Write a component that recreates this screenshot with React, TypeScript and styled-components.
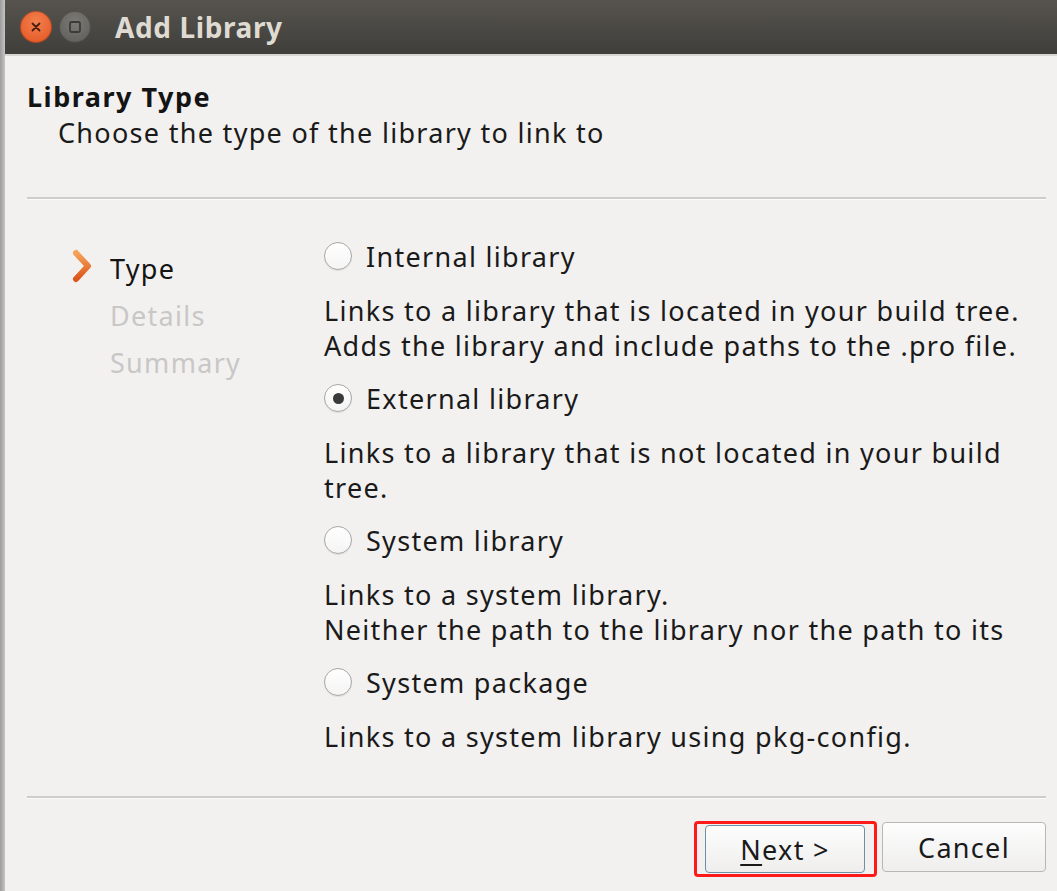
import styled, { createGlobalStyle } from 'styled-components';

const GlobalStyle = createGlobalStyle`
  html, body {
    margin: 0;
    padding: 0;
    background: #f2f1f0;
    overflow: hidden;
  }
  body {
    font-family: 'Noto Sans', 'DejaVu Sans', sans-serif;
    letter-spacing: 1.3px;
  }
`;

const Screen = styled.div`
  display: flex;
  width: 1057px;
  height: 891px;
`;

const DesktopEdge = styled.div`
  width: 5px;
  background: linear-gradient(90deg, #9c9c9c, #c4c4c4);
`;

const Dialog = styled.div`
  flex: 1;
  display: flex;
  flex-direction: column;
  background: #f2f1f0;
`;

const TitleBar = styled.div`
  height: 56px;
  display: flex;
  align-items: center;
  padding-left: 15px;
  gap: 7px;
  background: linear-gradient(180deg, #57544f 0%, #3f3e3a 100%);
  border-bottom: 2px solid #d8d6d2;
  box-sizing: border-box;
`;

const WinButton = styled.div<{ $close?: boolean }>`
  width: 32px;
  height: 32px;
  border-radius: 50%;
  display: flex;
  align-items: center;
  justify-content: center;
  background: ${(p) =>
    p.$close
      ? 'radial-gradient(circle at 50% 35%, #f4804f, #e0521e)'
      : 'radial-gradient(circle at 50% 35%, #7c7a75, #5c5a56)'};
  box-shadow: inset 0 0 0 1px rgba(0, 0, 0, 0.25);
`;

const Title = styled.div`
  margin-left: 17px;
  color: #dfdbd2;
  font-size: 28px;
  font-weight: 700;
  letter-spacing: 0.6px;
`;

const Body = styled.div`
  flex: 1;
  display: flex;
  flex-direction: column;
  padding: 0 11px 0 22px;
`;

const Header = styled.div`
  padding-top: 22px;
  height: 141px;
  box-sizing: border-box;
`;

const PageTitle = styled.div`
  font-size: 27px;
  font-weight: 700;
  color: #141414;
  line-height: 37px;
  letter-spacing: 1.5px;
`;

const PageSubtitle = styled.div`
  font-size: 27px;
  color: #1a1a1a;
  padding-left: 31px;
  line-height: 36px;
`;

const Separator = styled.div`
  height: 2px;
  background: #cfcdcb;
  border-bottom: 1px solid #fbfbfb;
`;

const Main = styled.div`
  height: 596px;
  display: grid;
  grid-template-columns: 297px 1fr;
  box-sizing: border-box;
  padding-top: 38px;
`;

const Steps = styled.div`
  display: flex;
  flex-direction: column;
  padding-top: 7px;
  padding-left: 43px;
`;

const Step = styled.div<{ $active?: boolean }>`
  display: flex;
  align-items: center;
  height: 47px;
  font-size: 27px;
  color: ${(p) => (p.$active ? '#141414' : '#c9c7c6')};
`;

const StepMarker = styled.div`
  width: 40px;
  display: flex;
  align-items: center;
  margin-top: -6px;
`;

const Options = styled.div`
  display: flex;
  flex-direction: column;
`;

const OptionRow = styled.div`
  display: flex;
  align-items: center;
  gap: 14px;
  height: 36px;
  font-size: 27px;
  color: #1a1a1a;
`;

const Radio = styled.div<{ $checked?: boolean }>`
  width: 26px;
  height: 26px;
  border-radius: 50%;
  border: 1px solid #a9a7a5;
  background: linear-gradient(180deg, #ffffff, #f4f4f4);
  box-shadow: 0 1px 1px rgba(0, 0, 0, 0.08);
  display: flex;
  align-items: center;
  justify-content: center;

  &::after {
    content: '';
    display: ${(p) => (p.$checked ? 'block' : 'none')};
    width: 11px;
    height: 11px;
    border-radius: 50%;
    background: #3a3a3a;
  }
`;

const Description = styled.div`
  font-size: 27px;
  line-height: 35px;
  color: #1a1a1a;
  padding: 19px 0 17px;
`;

const ButtonRow = styled.div`
  flex: 1;
  display: flex;
  justify-content: flex-end;
  align-items: flex-start;
  padding-top: 22px;
  gap: 5px;
`;

const Highlight = styled.div`
  border: 3px solid #ff1a1a;
  border-radius: 4px;
  padding: 0 9px 0 8px;
  height: 56px;
  box-sizing: border-box;
  display: flex;
  align-items: center;
`;

const Button = styled.div<{ $focused?: boolean }>`
  width: ${(p) => (p.$focused ? 160 : 164)}px;
  height: ${(p) => (p.$focused ? 48 : 50)}px;
  margin-top: ${(p) => (p.$focused ? 0 : 1)}px;
  box-sizing: border-box;
  border-radius: 4px;
  border: 1px solid ${(p) => (p.$focused ? '#6f8fa8' : '#b9b7b4')};
  background: linear-gradient(180deg, #fdfdfd, #efeeed);
  display: flex;
  align-items: center;
  justify-content: center;
  font-size: 27px;
  color: #1a1a1a;
`;

const Mnemonic = styled.span`
  text-decoration: underline;
  text-underline-offset: 4px;
`;

const options = [
  {
    label: 'Internal library',
    lines: [
      'Links to a library that is located in your build tree.',
      'Adds the library and include paths to the .pro file.',
    ],
  },
  {
    label: 'External library',
    checked: true,
    lines: ['Links to a library that is not located in your build', 'tree.'],
  },
  {
    label: 'System library',
    lines: ['Links to a system library.', 'Neither the path to the library nor the path to its'],
  },
  {
    label: 'System package',
    lines: ['Links to a system library using pkg-config.'],
  },
];

export default function App() {
  return (
    <Screen>
      <GlobalStyle />
      <DesktopEdge />
      <Dialog>
        <TitleBar>
          <WinButton $close>
            <svg width="14" height="14" viewBox="0 0 14 14">
              <path d="M3.5 3.5 L10.5 10.5 M10.5 3.5 L3.5 10.5" stroke="#4a1e0e" strokeWidth="1.8" strokeLinecap="round" />
            </svg>
          </WinButton>
          <WinButton>
            <svg width="14" height="14" viewBox="0 0 14 14">
              <rect x="2" y="2" width="10" height="10" rx="1.5" fill="none" stroke="#3c3b38" strokeWidth="1.8" />
            </svg>
          </WinButton>
          <Title>Add Library</Title>
        </TitleBar>
        <Body>
          <Header>
            <PageTitle>Library Type</PageTitle>
            <PageSubtitle>Choose the type of the library to link to</PageSubtitle>
          </Header>
          <Separator />
          <Main>
            <Steps>
              <Step $active>
                <StepMarker>
                  <svg width="24" height="36" viewBox="0 0 24 36">
                    <defs>
                      <linearGradient id="chev" x1="0" y1="0" x2="0" y2="1">
                        <stop offset="0" stopColor="#f5a35a" />
                        <stop offset="1" stopColor="#dc5519" />
                      </linearGradient>
                    </defs>
                    <path d="M6 5 L18 18 L6 31" fill="none" stroke="url(#chev)" strokeWidth="6" strokeLinecap="round" strokeLinejoin="round" />
                  </svg>
                </StepMarker>
                Type
              </Step>
              <Step>
                <StepMarker />
                Details
              </Step>
              <Step>
                <StepMarker />
                Summary
              </Step>
            </Steps>
            <Options>
              {options.map((o) => (
                <div key={o.label}>
                  <OptionRow>
                    <Radio $checked={o.checked} />
                    {o.label}
                  </OptionRow>
                  <Description>
                    {o.lines.map((l) => (
                      <div key={l}>{l}</div>
                    ))}
                  </Description>
                </div>
              ))}
            </Options>
          </Main>
          <Separator />
          <ButtonRow>
            <Highlight>
              <Button $focused>
                <Mnemonic>N</Mnemonic>ext &gt;
              </Button>
            </Highlight>
            <Button>Cancel</Button>
          </ButtonRow>
        </Body>
      </Dialog>
    </Screen>
  );
}
